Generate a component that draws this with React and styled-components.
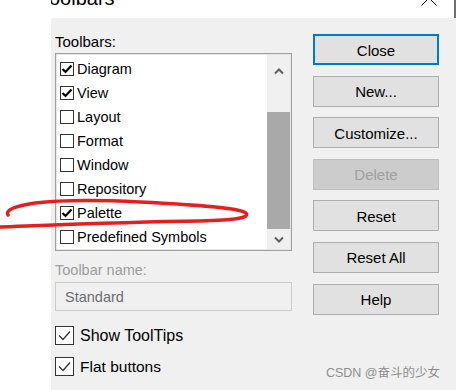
import React from 'react';
import styled, { createGlobalStyle } from 'styled-components';

const Global = createGlobalStyle`
    body {
        margin: 0;
        background: #ffffff;
        font-family: "Liberation Sans", Arial, sans-serif;
    }
`

const Page = styled.div`
    position: relative;
    width: 456px;
    height: 390px;
    overflow: hidden;
    background: #ffffff;
    display: flex;
    flex-direction: column;
    padding-left: 51px;
    box-sizing: border-box;
`

const TitleBar = styled.div`
    height: 18px;
    flex: none;
    display: flex;
    justify-content: space-between;
    align-items: flex-start;
    border-right: 2px solid #6f6f6f;
    overflow: hidden;
`

const TitleClip = styled.div`
    overflow: hidden;
    height: 18px;
`

const Title = styled.div`
    font-size: 20px;
    line-height: 20px;
    margin-top: -12px;
    text-indent: -12px;
    color: #000;
    white-space: nowrap;
`

const CloseGlyph = styled.svg`
    margin-top: -10px;
    margin-right: 17px;
    flex: none;
`

const Panel = styled.div`
    flex: 1;
    background: #f0f0f0;
    display: flex;
    gap: 21px;
    padding: 15px 0 0 4px;
`

const LeftCol = styled.div`
    width: 237px;
    display: flex;
    flex-direction: column;
`

const Label = styled.div`
    font-size: ${p => p.$size || 15}px;
    line-height: ${p => p.$lh || 18}px;
    color: ${p => (p.$disabled ? '#9d9d9d' : '#000')};
    margin-top: ${p => p.$mt || 0}px;
    white-space: nowrap;
`

const ListBox = styled.div`
    margin-top: 2px;
    height: 198px;
    box-sizing: border-box;
    background: #fff;
    border: 1px solid #a0a0a0;
    box-shadow: inset 0 0 0 1px #e6e6e6;
    display: flex;
`

const Items = styled.div`
    flex: 1;
    padding: 3px 0 0 4px;
`

const Row = styled.div`
    height: 24px;
    display: flex;
    align-items: center;
    gap: 3px;
    font-size: 14.5px;
    color: #000;
    white-space: nowrap;
`

const SmallBox = styled.span`
    width: 14px;
    height: 14px;
    box-sizing: border-box;
    border: 1px solid #333;
    background: #fff;
    display: flex;
    align-items: center;
    justify-content: center;
    flex: none;
`

const ScrollBar = styled.div`
    width: 23px;
    margin: 1px 1px 1px 0;
    background: #f0f0f0;
    display: flex;
    flex-direction: column;
`

const ArrowBtn = styled.div`
    height: ${p => p.$h}px;
    flex: none;
    display: flex;
    align-items: center;
    justify-content: center;
`

const Track = styled.div`
    flex: 1;
    display: flex;
    flex-direction: column;
    padding-top: ${p => p.$offset}px;
`

const Thumb = styled.div`
    height: ${p => p.$h}px;
    background: #a9a9a9;
`

const NameInput = styled.div`
    margin-top: 3px;
    height: 29px;
    box-sizing: border-box;
    border: 1px solid #cbcbcb;
    background: #f0f0f0;
    padding-left: 9px;
    display: flex;
    align-items: center;
    font-size: 14.5px;
    color: #6d6d74;
`

const CheckRow = styled.div`
    margin-top: ${p => p.$mt}px;
    display: flex;
    align-items: center;
    gap: 6px;
    height: 19px;
    font-size: ${p => p.$size}px;
    color: #000;
`

const BigBox = styled.span`
    width: 19px;
    height: 19px;
    box-sizing: border-box;
    border: 1px solid #333;
    background: #fff;
    display: flex;
    align-items: center;
    justify-content: center;
    flex: none;
`

const RightCol = styled.div`
    width: 126px;
    margin-top: 1px;
    display: flex;
    flex-direction: column;
    gap: 10.6px;
`

const Button = styled.div`
    height: 31px;
    box-sizing: border-box;
    background: ${p => (p.$disabled ? '#cccccc' : '#e1e1e1')};
    border: ${p => (p.$default ? '2px solid #0078d7' : p.$disabled ? '1px solid #bfbfbf' : '1px solid #adadad')};
    color: ${p => (p.$disabled ? '#a0a0a0' : '#000')};
    font-size: 15px;
    padding-top: 1px;
    display: flex;
    align-items: center;
    justify-content: center;
`

const Watermark = styled.div`
    position: absolute;
    right: 16px;
    bottom: 9px;
    font-family: "Liberation Sans", "Noto Sans CJK SC", sans-serif;
    font-size: 12.5px;
    line-height: 15px;
    color: #8f8f8f;
    white-space: nowrap;
`

const Scribble = styled.svg`
    position: absolute;
    left: 0;
    top: 0;
    pointer-events: none;
`

const toolbars = [
    { name: 'Diagram', on: true },
    { name: 'View', on: true },
    { name: 'Layout' },
    { name: 'Format' },
    { name: 'Window' },
    { name: 'Repository' },
    { name: 'Palette', on: true },
    { name: 'Predefined Symbols' },
]

const buttons = [
    { label: 'Close', isDefault: true },
    { label: 'New...' },
    { label: 'Customize...' },
    { label: 'Delete', disabled: true },
    { label: 'Reset' },
    { label: 'Reset All' },
    { label: 'Help' },
]

const BoldCheck = () => (
    <svg width="12" height="12" viewBox="0 0 12 12">
        <path d="M1.5 6 L4.5 9 L10.5 2.5" fill="none" stroke="#000" strokeWidth="2.2" />
    </svg>
)

const ThinCheck = () => (
    <svg width="17" height="17" viewBox="0 0 17 17">
        <path d="M3 8.5 L7 12.5 L14 4.5" fill="none" stroke="#333" strokeWidth="1.3" />
    </svg>
)

const Chevron = ({ down }) => (
    <svg width="10" height="7" viewBox="0 0 10 7">
        <path
            d={down ? 'M1 1.5 L5 5.5 L9 1.5' : 'M1 5.5 L5 1.5 L9 5.5'}
            fill="none"
            stroke="#606060"
            strokeWidth="2"
        />
    </svg>
)

const App = () => {
    return (
        <Page>
            <Global />
            <TitleBar>
                <TitleClip>
                    <Title>Toolbars</Title>
                </TitleClip>
                <CloseGlyph width="16" height="16" viewBox="0 0 16 16">
                    <path d="M0.5 0.5 L15.5 15.5 M15.5 0.5 L0.5 15.5" stroke="#000" strokeWidth="1" />
                </CloseGlyph>
            </TitleBar>
            <Panel>
                <LeftCol>
                    <Label>Toolbars:</Label>
                    <ListBox>
                        <Items>
                            {toolbars.map(t => (
                                <Row key={t.name}>
                                    <SmallBox>{t.on && <BoldCheck />}</SmallBox>
                                    {t.name}
                                </Row>
                            ))}
                        </Items>
                        <ScrollBar>
                            <ArrowBtn $h={32}><Chevron /></ArrowBtn>
                            <Track $offset={25}>
                                <Thumb $h={117} />
                            </Track>
                            <ArrowBtn $h={21}><Chevron down /></ArrowBtn>
                        </ScrollBar>
                    </ListBox>
                    <Label $disabled $size={14.5} $lh={17} $mt={11}>Toolbar name:</Label>
                    <NameInput>Standard</NameInput>
                    <CheckRow $mt={15} $size={16}>
                        <BigBox><ThinCheck /></BigBox>
                        Show ToolTips
                    </CheckRow>
                    <CheckRow $mt={12} $size={15.5}>
                        <BigBox><ThinCheck /></BigBox>
                        Flat buttons
                    </CheckRow>
                </LeftCol>
                <RightCol>
                    {buttons.map(b => (
                        <Button key={b.label} $default={b.isDefault} $disabled={b.disabled}>
                            {b.label}
                        </Button>
                    ))}
                </RightCol>
            </Panel>
            <Scribble width="456" height="390" viewBox="0 0 456 390">
                <path
                    d="M0 227 C30 226 120 222 200 221 C235 220 250 218 246 213 C240 208 200 205 140 202 C100 200 60 200 35 203 C15 206 5 210 8 215"
                    fill="none"
                    stroke="#e3201d"
                    strokeWidth="3.5"
                    strokeLinecap="round"
                />
            </Scribble>
            <Watermark>CSDN @奋斗的少女</Watermark>
        </Page>
    );
}

export default App;
